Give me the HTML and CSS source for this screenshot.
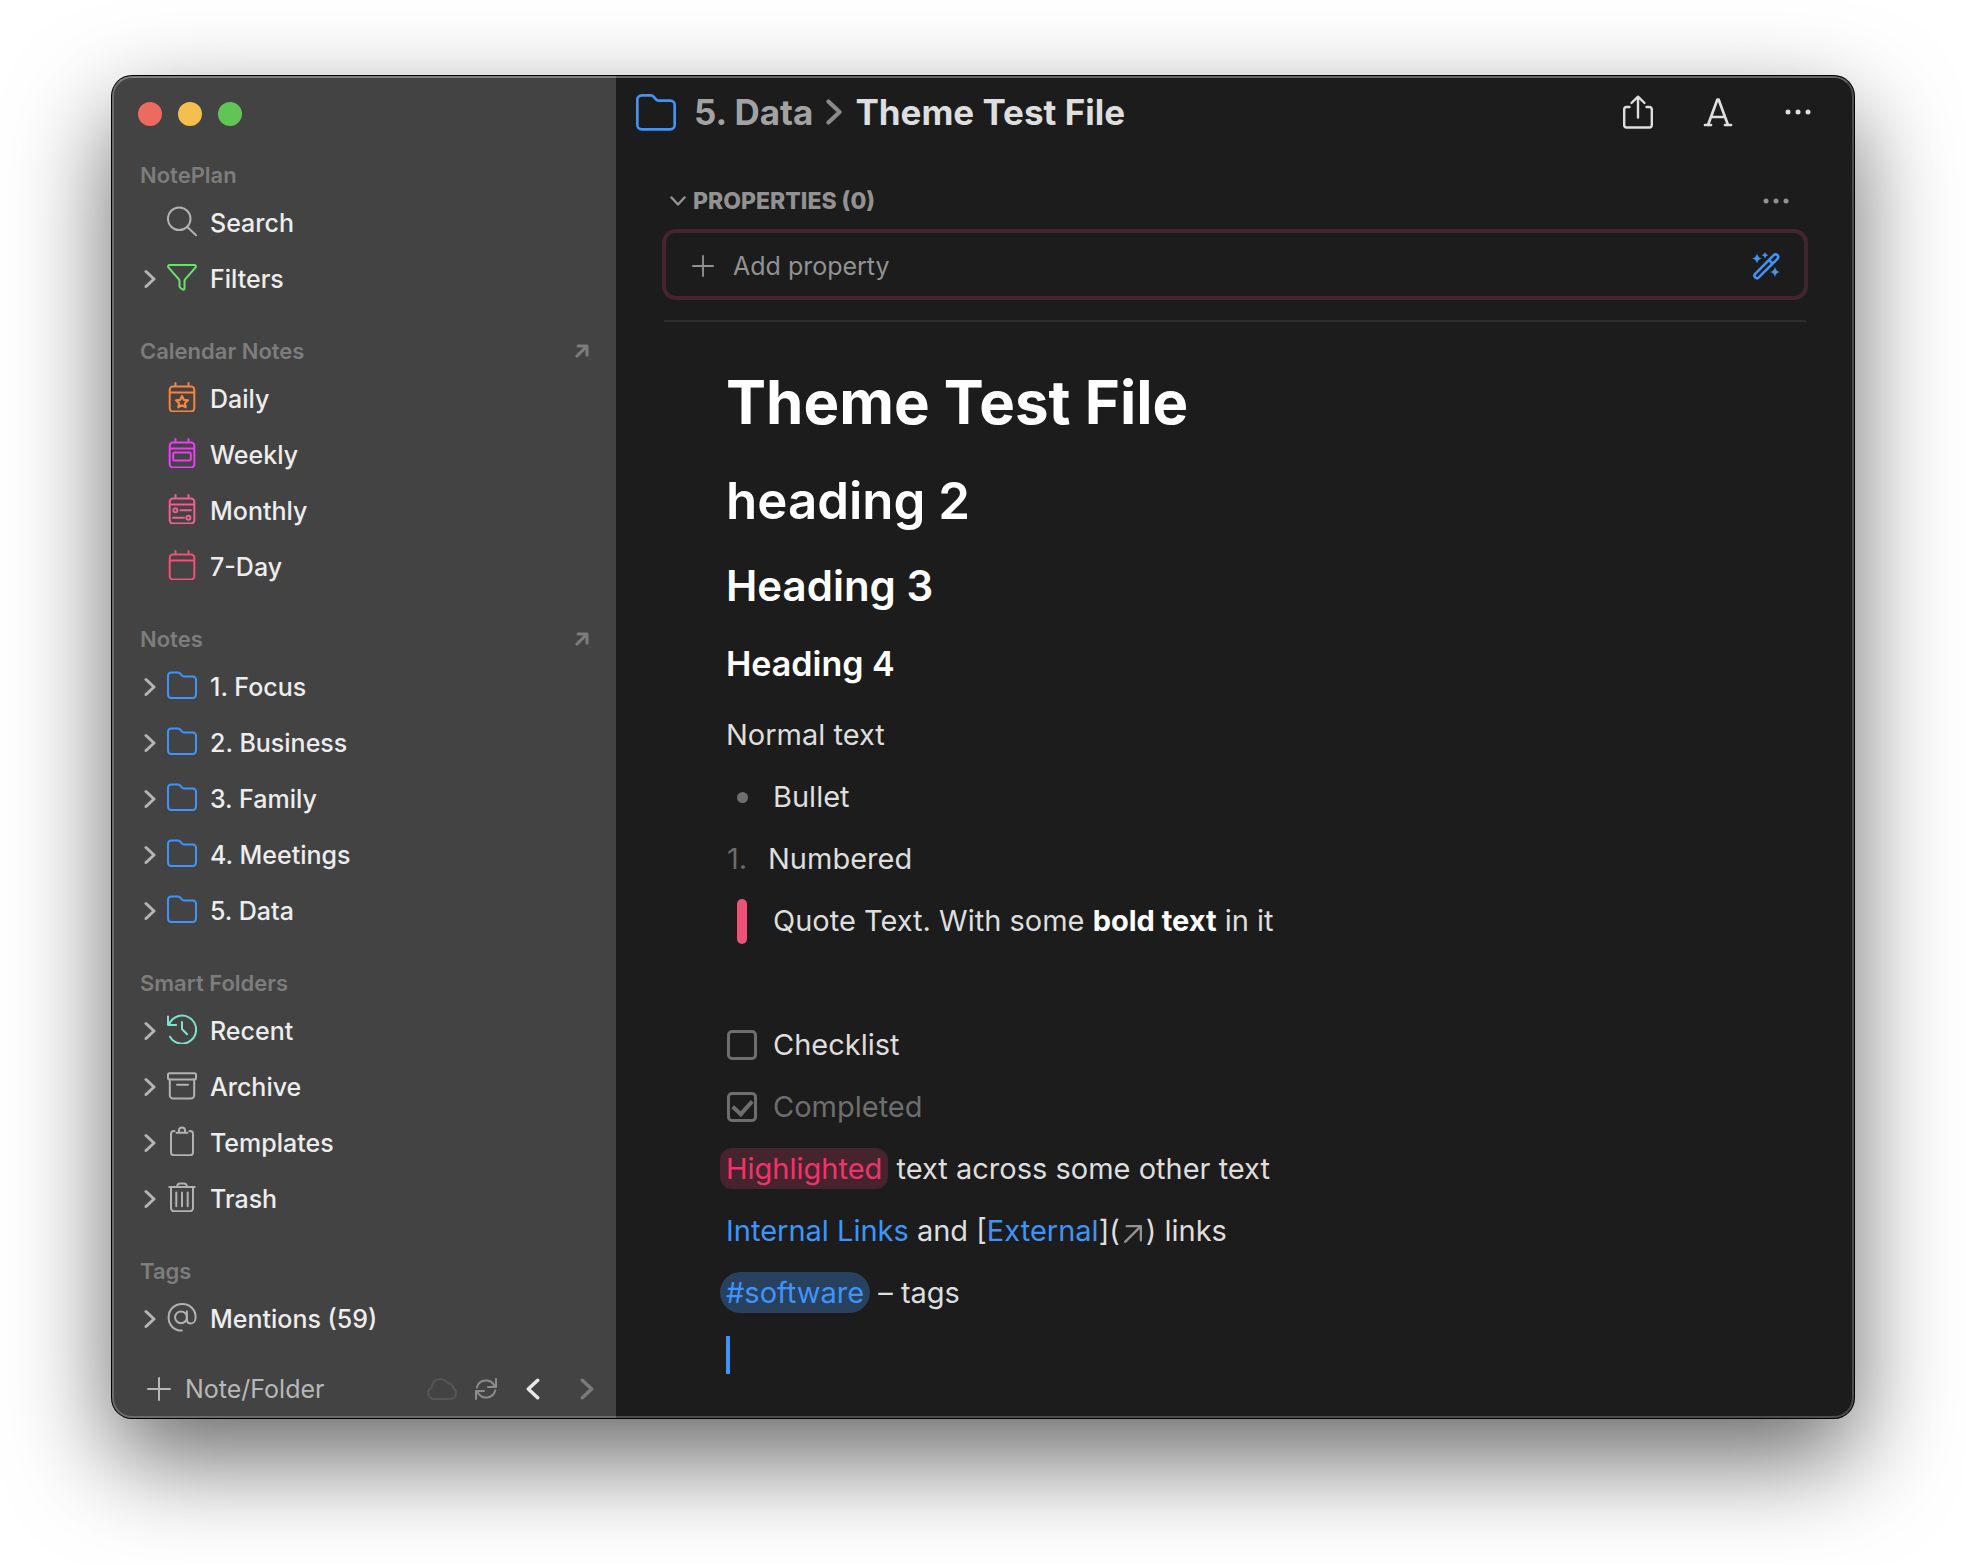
FILE: index.html
```html
<!DOCTYPE html>
<html lang="en">
<head>
<meta charset="utf-8">
<title>Theme Test File</title>
<link rel="stylesheet" href="styles.css">
</head>
<body>
<svg class="sprite" aria-hidden="true">
  <symbol id="i-search" viewBox="0 0 30 30"><circle cx="12.2" cy="12.7" r="11.3"/><path d="M20.3 21l8.8 8.3"/></symbol>
  <symbol id="i-filter" viewBox="0 0 30 30"><path d="M2.8 3h24.4c1.6 0 2.2 1.500 1.200 2.600L18.300 17.200c-.6.7-.8 1.300-.8 2.300V26c0 1.600-1 2.200-2.200 1.300l-2-1.500c-.7-.5-.8-1-.8-1.800v-4.500c0-1-.2-1.600-.8-2.300L1.600 5.600C.6 4.500 1.200 3 2.800 3z"/></symbol>
  <symbol id="i-calendar" viewBox="0 0 30 30"><rect x="2.700" y="4.600" width="24.600" height="24.800" rx="3.200"/><path d="M3 10.600h24M8.500 1v3M21.500 1v3"/></symbol>
  <symbol id="i-daily" viewBox="0 0 30 30"><use href="#i-calendar"/><path d="M15 14l1.800 3.800 4.200.5-3.100 2.900.8 4.100-3.700-2-3.700 2 .8-4.100L9 18.300l4.200-.5z" stroke-width="2.200"/></symbol>
  <symbol id="i-weekly" viewBox="0 0 30 30"><use href="#i-calendar"/><rect x="6.200" y="14.600" width="17.600" height="7.800" rx="1.500" stroke-width="2"/></symbol>
  <symbol id="i-monthly" viewBox="0 0 30 30"><use href="#i-calendar"/><circle cx="8.400" cy="16.300" r="2"/><path d="M13.500 16.300H24M6 23.700h11"/><circle cx="21.400" cy="23.700" r="2"/></symbol>
  <symbol id="i-folder" viewBox="0 0 30 30"><path d="M1 5.700A3.200 3.200 0 0 1 4.200 2.500h6.600c1.300 0 2 .4 2.700 1.300l1.100 1.400c.7.900 1.300 1.300 2.500 1.300h8.700A3.200 3.200 0 0 1 29 9.700v15.100a3.200 3.200 0 0 1-3.200 3.200H4.200A3.200 3.200 0 0 1 1 24.800z"/></symbol>
  <symbol id="i-recent" viewBox="0 0 30 30"><path d="M3 22.700A14 14 0 1 0 2 10.600M1 2.500v8.600h8.200M15 8v7l5 5.300"/></symbol>
  <symbol id="i-archive" viewBox="0 0 30 30"><rect x="1" y="3.300" width="28" height="6.200" rx="1.500"/><path d="M2.800 9.500v15.800a3.200 3.200 0 0 0 3.200 3.200h18a3.200 3.200 0 0 0 3.200-3.200V9.500M10 14.700h11"/></symbol>
  <symbol id="i-template" viewBox="0 0 30 30"><path d="M7.500 5H7a3 3 0 0 0-3 3v18.300a3 3 0 0 0 3 3h16a3 3 0 0 0 3-3V8a3 3 0 0 0-3-3h-.5M9.500 6.800h11M12 6.500V4.400a3 3 0 0 1 6 0v2.100" /></symbol>
  <symbol id="i-trash" viewBox="0 0 30 30"><path d="M2.300 5h25.400M9.800 5c.5-2.200 1.500-3.500 3-3.500h4.400c1.500 0 2.500 1.300 3 3.500M4 5v21a3.200 3.200 0 0 0 3.200 3.200h15.600A3.200 3.200 0 0 0 26 26V5M9.300 10.500v13.800M15 10.500v13.800M20.700 10.500v13.800"/></symbol>
  <symbol id="i-mention" viewBox="0 0 30 30"><circle cx="14" cy="15.300" r="5.900"/><path d="M19.900 9.300v8.200c0 2.600 1.500 4 3.800 4 2.900 0 4.900-2.600 4.900-6.300C28.600 7.500 22.900 2 15.200 2 7.400 2 1.600 7.700 1.600 15.400c0 7.800 5.700 13.200 13.200 13.200"/></symbol>
  <symbol id="i-right" viewBox="0 0 12 20"><path d="M2 2.500L10 10l-8 7.500"/></symbol>
  <symbol id="i-left" viewBox="0 0 12 20"><path d="M10 2.500L2 10l8 7.500"/></symbol>
  <symbol id="i-open" viewBox="0 0 14 14"><path d="M3 2h9v9M12 2L2 12"/></symbol>
  <symbol id="i-plus" viewBox="0 0 24 24"><path d="M12 1v22M1 12h22"/></symbol>
  <symbol id="i-cloud" viewBox="0 0 30 22"><path d="M7 21a6 6 0 0 1-2.300-11.400C5 4.500 8.500 1 13 1c3.600 0 6 1.600 7.600 4.300 3.400-.2 5.300 1.600 5.400 4.700 2 1 3 2.900 3 5 0 3.500-2.500 6-6 6z"/></symbol>
  <symbol id="i-sync" viewBox="0 0 22 22"><path d="M1.800 9.500A9.500 9.500 0 0 1 19.300 7.400L21 9M21 1v8h-8M20.200 12.500A9.500 9.500 0 0 1 2.700 14.600L1 13M1 21v-8h8"/></symbol>
  <symbol id="i-more" viewBox="0 0 26 6"><g stroke="none" fill="currentColor"><circle cx="3" cy="3" r="2.500"/><circle cx="13" cy="3" r="2.500"/><circle cx="23" cy="3" r="2.500"/></g></symbol>
  <symbol id="i-share" viewBox="0 0 30 34"><path stroke-width="2.400" d="M6.500 12H3.600C2.200 12 1.200 13 1.200 14.400v15.700c0 1.400 1 2.400 2.400 2.400h22.800c1.400 0 2.400-1 2.400-2.400V14.400c0-1.400-1-2.400-2.400-2.400h-2.900M15 22.500V1.700M8.500 8L15 1.700 21.500 8"/></symbol>
  <symbol id="i-format" viewBox="0 0 30 30"><path stroke-width="2.700" d="M5 28L14.400 2.500h1.200L25 28M8.200 20h13.600M2 28h6M22 28h6"/></symbol>
  <symbol id="i-wand" viewBox="0 0 28 28"><path stroke-width="2.600" d="M3.200 21.800L21.800 3.200a2.500 2.500 0 0 1 3.600 3.600L6.800 25.400a2.500 2.500 0 0 1-3.600-3.600zM17 8l3.500 3.500"/><g stroke="none" fill="currentColor"><path d="M5 1.500q1 4.500 5 5-4 .5-5 5-1-4.500-5-5 4-.5 5-5zM13 0q.7 2.800 3.300 3.300Q13.700 3.800 13 6.600q-.7-2.800-3.300-3.300Q12.300 2.800 13 0zM23 15q1 4.500 5 5-4 .5-5 5-1-4.500-5-5 4-.5 5-5z"/></g></symbol>
</svg>

<div class="window">
  <aside class="sidebar">
    <div class="lights">
      <button class="light close" aria-label="Close"></button>
      <button class="light minimize" aria-label="Minimize"></button>
      <button class="light expand" aria-label="Zoom"></button>
    </div>
    <nav class="nav">
      <section class="group">
        <h2 class="group-title">NotePlan</h2>
        <a class="item" href="#search"><span class="arrow"></span><svg class="icon"><use href="#i-search"/></svg>Search</a>
        <a class="item" href="#filters"><svg class="arrow"><use href="#i-right"/></svg><svg class="icon green"><use href="#i-filter"/></svg>Filters</a>
      </section>
      <section class="group">
        <h2 class="group-title">Calendar Notes<button class="open" aria-label="Open calendar notes"><svg><use href="#i-open"/></svg></button></h2>
        <a class="item" href="#daily"><span class="arrow"></span><svg class="icon orange"><use href="#i-daily"/></svg>Daily</a>
        <a class="item" href="#weekly"><span class="arrow"></span><svg class="icon magenta"><use href="#i-weekly"/></svg>Weekly</a>
        <a class="item" href="#monthly"><span class="arrow"></span><svg class="icon pink"><use href="#i-monthly"/></svg>Monthly</a>
        <a class="item" href="#week"><span class="arrow"></span><svg class="icon red"><use href="#i-calendar"/></svg>7-Day</a>
      </section>
      <section class="group">
        <h2 class="group-title">Notes<button class="open" aria-label="Open notes"><svg><use href="#i-open"/></svg></button></h2>
        <a class="item" href="#focus"><svg class="arrow"><use href="#i-right"/></svg><svg class="icon blue"><use href="#i-folder"/></svg>1. Focus</a>
        <a class="item" href="#business"><svg class="arrow"><use href="#i-right"/></svg><svg class="icon blue"><use href="#i-folder"/></svg>2. Business</a>
        <a class="item" href="#family"><svg class="arrow"><use href="#i-right"/></svg><svg class="icon blue"><use href="#i-folder"/></svg>3. Family</a>
        <a class="item" href="#meetings"><svg class="arrow"><use href="#i-right"/></svg><svg class="icon blue"><use href="#i-folder"/></svg>4. Meetings</a>
        <a class="item" href="#data"><svg class="arrow"><use href="#i-right"/></svg><svg class="icon blue"><use href="#i-folder"/></svg>5. Data</a>
      </section>
      <section class="group">
        <h2 class="group-title">Smart Folders</h2>
        <a class="item" href="#recent"><svg class="arrow"><use href="#i-right"/></svg><svg class="icon mint"><use href="#i-recent"/></svg>Recent</a>
        <a class="item" href="#archive"><svg class="arrow"><use href="#i-right"/></svg><svg class="icon"><use href="#i-archive"/></svg>Archive</a>
        <a class="item" href="#templates"><svg class="arrow"><use href="#i-right"/></svg><svg class="icon"><use href="#i-template"/></svg>Templates</a>
        <a class="item" href="#trash"><svg class="arrow"><use href="#i-right"/></svg><svg class="icon"><use href="#i-trash"/></svg>Trash</a>
      </section>
      <section class="group">
        <h2 class="group-title">Tags</h2>
        <a class="item" href="#mentions"><svg class="arrow"><use href="#i-right"/></svg><svg class="icon"><use href="#i-mention"/></svg>Mentions (59)</a>
      </section>
    </nav>
    <footer class="side-footer">
      <button class="new-note"><svg><use href="#i-plus"/></svg>Note/Folder</button>
      <svg class="cloud"><use href="#i-cloud"/></svg>
      <button class="sync" aria-label="Sync"><svg><use href="#i-sync"/></svg></button>
      <button class="step" aria-label="Back"><svg><use href="#i-left"/></svg></button>
      <button class="step" aria-label="Forward" disabled><svg><use href="#i-right"/></svg></button>
    </footer>
  </aside>

  <main class="main">
    <header class="toolbar">
      <svg class="crumb-folder"><use href="#i-folder"/></svg>
      <a class="crumb" href="#data">5. Data</a>
      <svg class="crumb-arrow"><use href="#i-right"/></svg>
      <span class="crumb-title">Theme Test File</span>
      <div class="tools">
        <button class="tool" aria-label="Share"><svg class="share"><use href="#i-share"/></svg></button>
        <button class="tool" aria-label="Text format"><svg class="format"><use href="#i-format"/></svg></button>
        <button class="tool" aria-label="More"><svg class="more"><use href="#i-more"/></svg></button>
      </div>
    </header>

    <section class="properties">
      <div class="prop-head">
        <button class="prop-toggle"><svg viewBox="0 0 16 10"><path stroke-width="2.500" d="M1.500 1.500L8 8.500l6.500-7"/></svg>PROPERTIES (0)</button>
        <button class="prop-more" aria-label="Property options"><svg class="more"><use href="#i-more"/></svg></button>
      </div>
      <div class="prop-box">
        <button class="prop-add"><svg><use href="#i-plus"/></svg>Add property</button>
        <button class="wand" aria-label="Suggest properties"><svg><use href="#i-wand"/></svg></button>
      </div>
    </section>

    <article class="note">
      <h1>Theme Test File</h1>
      <h2>heading 2</h2>
      <h3>Heading 3</h3>
      <h4>Heading 4</h4>
      <p>Normal text</p>
      <p class="line"><span class="marker"><span class="dot"></span></span>Bullet</p>
      <p class="line numbered"><span class="number">1.</span>Numbered</p>
      <blockquote class="line"><span class="marker"><span class="bar"></span></span><span>Quote Text. With some <strong>bold text</strong> in it</span></blockquote>
      <p class="blank"></p>
      <label class="line"><input type="checkbox">Checklist</label>
      <label class="line done"><input type="checkbox" checked>Completed</label>
      <p><mark>Highlighted</mark> text across some other text</p>
      <p><a href="#internal">Internal Links</a> and [<a href="#external">External</a>](<svg class="ext"><use href="#i-open"/></svg>) links</p>
      <p><a class="tag" href="#software">#software</a> – tags</p>
      <p class="current"><span class="caret"></span></p>
    </article>
  </main>
</div>
</body>
</html>
```
FILE: styles.css
```css
* { box-sizing: border-box; }

:root {
  --blue: #4094f7;
  --side: #434343;
  --page: #1c1c1c;
  --text: #dedede;
}

body {
  margin: 0;
  min-height: 100vh;
  padding: 76px 112px 148px;
  display: flex;
  background: #fff;
  color: var(--text);
  font-family: Inter, "Liberation Sans", sans-serif;
}

a { color: inherit; text-decoration: none; }
h1, h2, h3, h4, p, blockquote { margin: 0; }

button {
  display: flex;
  align-items: center;
  padding: 0;
  border: 0;
  background: none;
  color: inherit;
  font: inherit;
}

svg {
  display: block;
  flex: none;
  fill: none;
  stroke: currentColor;
  stroke-width: 2;
  stroke-linecap: round;
  stroke-linejoin: round;
}

.sprite { display: none; }

.window {
  position: relative;
  flex: 1;
  display: flex;
  border-radius: 20px;
  overflow: hidden;
  background: var(--page);
  box-shadow: 0 0 0 1px #000, 0 40px 100px rgba(0, 0, 0, .6);
}

/* light rim over both panes */
.window::after {
  content: "";
  position: absolute;
  inset: 0;
  border: 2px solid rgba(255, 255, 255, .22);
  border-top-color: rgba(255, 255, 255, .32);
  border-radius: 20px;
  pointer-events: none;
}

/* Sidebar */
.sidebar {
  flex: none;
  width: 504px;
  display: flex;
  flex-direction: column;
  background: var(--side);
}

.lights { display: flex; gap: 16px; padding: 26px; }
.light { width: 24px; height: 24px; border-radius: 50%; }
.close { background: #ed6a5f; }
.minimize { background: #f5bf4f; }
.expand { background: #61c555; }

.nav {
  flex: 1;
  display: flex;
  flex-direction: column;
  gap: 24px;
  padding: 3px 27px 0 28px;
}

.group-title {
  display: flex;
  align-items: center;
  justify-content: space-between;
  height: 40px;
  color: #7d7d7d;
  font-size: 22px;
  font-weight: 600;
}

.open svg { width: 14px; height: 14px; stroke-width: 3; }

.item {
  display: flex;
  align-items: center;
  height: 56px;
  color: #ededed;
  font-size: 25px;
  font-weight: 500;
}

.arrow { width: 12px; height: 20px; margin: 0 11px 0 4px; stroke-width: 3; color: #b5b5b5; }
.icon { width: 30px; height: 30px; margin: 0 13px 4px 0; color: #b2b2b2; }
.blue { color: var(--blue); }
.green { color: #6fe06f; }
.orange { color: #f5853f; }
.magenta { color: #ea3ff0; }
.pink { color: #ee5f92; }
.red { color: #ee5276; }
.mint { color: #7fe0cf; }

.side-footer {
  display: flex;
  align-items: center;
  height: 58px;
  padding: 0 22px 0 35px;
}

.new-note { margin-right: auto; gap: 14px; color: #b8b8b8; font-size: 25px; }
.new-note svg { width: 24px; height: 24px; }
.cloud { width: 30px; height: 22px; color: #565656; }
.sync { margin: 0 29px 0 18px; color: #8c8c8c; }
.sync svg { width: 22px; height: 22px; }
.step + .step { margin-left: 40px; }
.step svg { width: 14px; height: 24px; stroke-width: 3; color: #e8e8e8; }
.step:disabled svg { color: #7a7a7a; }

/* Toolbar */
.main { flex: 1; min-width: 0; }

.toolbar {
  display: flex;
  align-items: center;
  height: 72px;
  padding: 0 36px 0 20px;
  font-size: 35px;
  font-weight: 700;
}

.crumb-folder { width: 40px; height: 40px; margin-right: 18px; color: var(--blue); }
.crumb { color: #a2a2a2; }
.crumb-arrow { width: 18px; height: 28px; margin: 0 12px; color: #8a8a8a; stroke-width: 3; }
.crumb-title { color: #dedede; }

.tools { display: flex; gap: 40px; margin-left: auto; }
.tool { justify-content: center; width: 40px; height: 40px; }
.share { width: 30px; height: 34px; }
.format { width: 30px; height: 30px; }
.more { width: 26px; height: 6px; }

/* Properties */
.properties {
  margin: 32px 48px 0;
  padding-bottom: 20px;
  border-bottom: 2px solid #2e2e2e;
}

.prop-head {
  display: flex;
  align-items: center;
  justify-content: space-between;
  height: 42px;
  padding: 0 17px 0 6px;
  color: #929292;
}

.prop-toggle { gap: 7px; font-size: 23px; font-weight: 800; }
.prop-toggle svg { width: 16px; height: 10px; }

.prop-box {
  display: flex;
  align-items: center;
  justify-content: space-between;
  height: 71px;
  margin: 7px -2px 0;
  padding: 2px 24px 0 26px;
  border: 4px solid #45242e;
  border-radius: 14px;
}

.prop-add { gap: 19px; color: #929292; font-size: 25px; }
.prop-add svg { width: 22px; height: 22px; }
.wand svg { width: 28px; height: 28px; color: var(--blue); }

/* Note */
.note {
  padding: 28px 110px 20px;
  color: var(--text);
  font-size: 29px;
  line-height: 62px;
}

.note h1, .note h2, .note h3, .note h4, .note strong { color: #fff; }
.note h1 { font-size: 60px; font-weight: 700; line-height: 104px; }
.note h2 { font-size: 51px; font-weight: 600; line-height: 94px; }
.note h3 { font-size: 42px; font-weight: 600; line-height: 76px; }
.note h4 { font-size: 34px; font-weight: 600; line-height: 80px; }
.note a { color: var(--blue); }

.line { display: flex; align-items: center; gap: 16px; height: 62px; padding-left: 1px; }
.numbered { gap: 15px; }
.blank { height: 62px; }
.marker { display: flex; justify-content: center; width: 30px; }
.number { width: 26px; color: #6b6b6b; }
.dot { width: 11px; height: 11px; border-radius: 50%; background: #6e6e6e; }
.bar { width: 10px; height: 45px; border-radius: 5px; background: #ee5276; }

.line input {
  appearance: none;
  display: grid;
  place-items: center;
  width: 30px;
  height: 30px;
  margin: 0;
  border: 3px solid #6e6e6e;
  border-radius: 5px;
}

.line input:checked::before {
  content: "";
  width: 15px;
  height: 9px;
  margin-bottom: 4px;
  border: solid #6e6e6e;
  border-width: 0 0 4px 4px;
  transform: rotate(-48deg);
}

.done { color: #6e6e6e; }

.note mark, .note .tag { margin-left: -6px; padding: 3px 6px; }
.note mark { border-radius: 12px; background: #45242e; color: #f2336b; }
.note .tag { border-radius: 21px; background: #27415f; }
.ext { display: inline-block; width: 22px; height: 22px; margin: 0 2px; vertical-align: -4px; stroke-width: 1.5; color: #929292; }
.current { display: flex; align-items: center; height: 62px; }
.caret { width: 4px; height: 38px; background: var(--blue); }
```
